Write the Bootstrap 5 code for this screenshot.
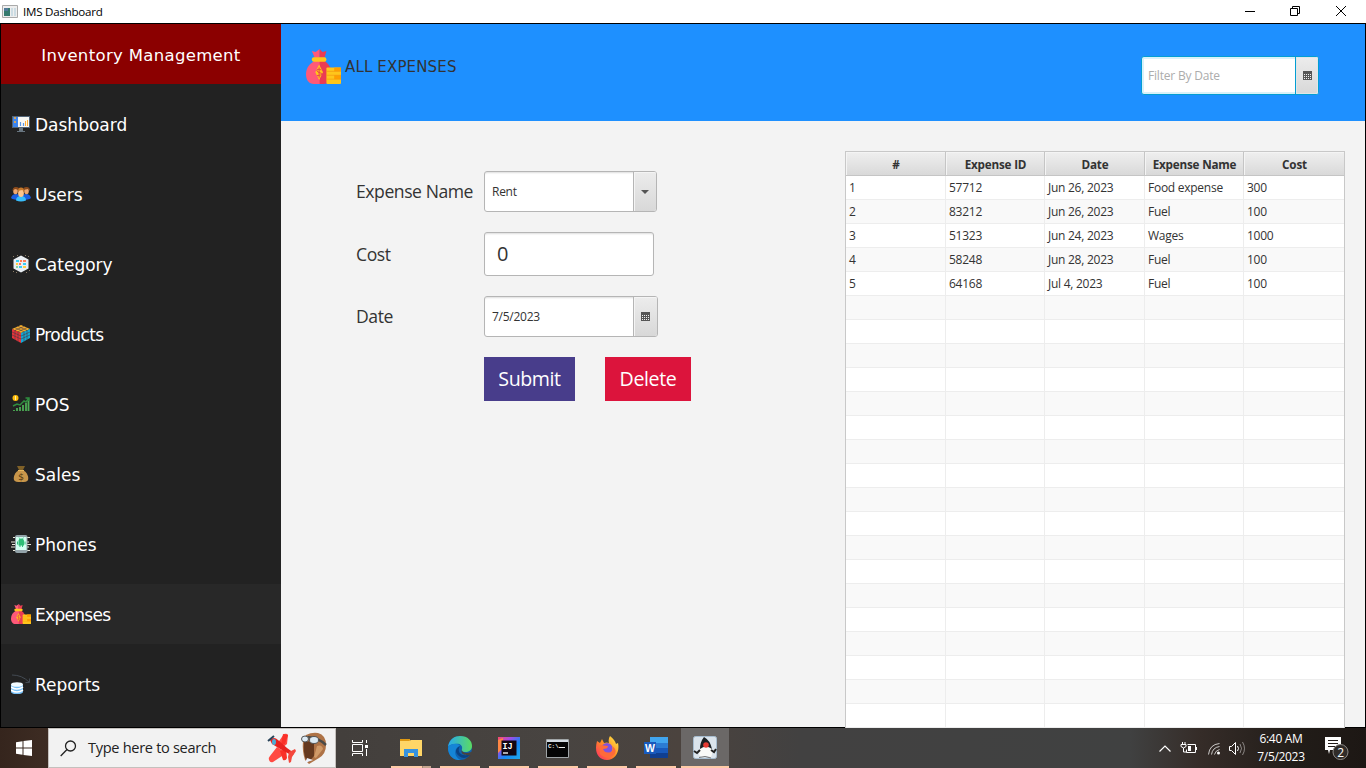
<!DOCTYPE html>
<html lang="en">
<head>
<meta charset="utf-8">
<meta name="viewport" content="width=device-width, initial-scale=1">
<title>IMS Dashboard</title>
<link href="https://cdn.jsdelivr.net/npm/bootstrap@5.3.0/dist/css/bootstrap.min.css" rel="stylesheet">
<style>
  body { width:1366px; height:768px; overflow:hidden; font-family:"Open Sans","Noto Sans",sans-serif; font-size:12px; letter-spacing:-.26px; line-height:1.2; color:#333; background:#fff; }
  svg { display:block; flex:none; letter-spacing:0; }
  .titlebar { height:23px; color:#000; padding-left:2px; }
  .titlebar .caption { font-size:11.6px; letter-spacing:-.25px; margin-left:5px; }
  .winbtn { width:45.5px; height:20px; }
  .frame { height:705px; border:1px solid #000; background:#f3f3f3; }
  .sidebar { width:280px; background:#222; flex:none; font-family:"DejaVu Sans",sans-serif; font-size:17px; letter-spacing:0; color:#fff; }
  .brand { height:60px; background:#8b0000; font-size:16.5px; letter-spacing:.33px; padding-top:3px; }
  .side-links { padding-top:10px; gap:10px; height:643px; overflow:hidden; }
  .side-links .nav-link { height:60px; color:#fff; padding:2px 0 0 10px; gap:4px; flex:none; }
  .side-links .nav-link.active { background:#282828; }
  .side-links .tight { letter-spacing:-.6px; }
  .side-links .active.tight { letter-spacing:-.7px; }
  .side-links svg { margin-top:-3px; }
  .page-head { height:97px; background:#1e90ff; padding:0 46px 0 24px; }
  .page-head h1 { font:15px "DejaVu Sans",sans-serif; letter-spacing:.15px; color:#333; margin:0; padding:1px 0 0 2px; }
  .control { display:flex; background:#fff; border:1px solid #b5b5b5; border-radius:3px; box-shadow:inset 0 2px 2px -1px #ddd; height:41px; }
  .control .value { flex:1; display:flex; align-items:center; padding:2px 0 0 7px; }
  .control .arrow { width:24px; border-left:1px solid #b5b5b5; border-radius:0 2px 2px 0; background:linear-gradient(#ececec,#d8d8d8); display:flex; align-items:center; justify-content:center; box-shadow:inset 1px 1px #f4f4f4; }
  .control .arrow.slim { width:23px; }
  .filter { width:178px; height:39px; border-color:#039ed3; box-shadow:inset 0 0 0 2px #d9f1f9; color:#acacac; letter-spacing:-.2px; }
  .filter .value { padding-left:6px; }
  .filter .arrow { border-color:#039ed3; box-shadow:inset 0 0 0 1px #e0e6e8; }
  .expense-form { display:grid; grid-template-columns:128px 210px; grid-template-rows:41px 44px 41px 44px; row-gap:20px; padding:50px 0 0 75px; width:564px; flex:none; align-content:start; }
  .expense-form label { font-size:17.6px; letter-spacing:-.45px; align-self:center; padding-top:1px; }
  .action { height:44px; border:0; border-radius:0; color:#fff; font-size:19.6px; letter-spacing:-.4px; padding:0; line-height:44px; }
  .table-pane { width:500px; height:577px; margin-top:30px; border:1px solid #c8c8c8; border-bottom:0; background:#fff; overflow:hidden; z-index:1; flex:none; }
  .grid-row { display:grid; grid-template-columns:100px 99px 100px 99px 100px; grid-template-rows:24px; height:24px; }
  .grid-row > div { border-right:1px solid #ededed; border-bottom:1px solid #ededed; padding-left:3px; line-height:23px; white-space:nowrap; }
  .grid-row:nth-child(odd) > div { background:#f9f9f9; }
  .grid-row.heading > div { background:linear-gradient(#efefef,#d9d9d9); border-color:#c5c5c5; font-weight:700; font-size:11.7px; letter-spacing:-.2px; text-align:center; padding:1px 0 0 1px; line-height:22px; box-shadow:inset 1px 1px #f4f4f4; }
  .grid-row > div:last-child { border-right:0; }
  .taskbar { height:40px; background:linear-gradient(90deg,#35251d 0,#3c2b22 40px,#433f3c 340px,#484441 560px,#4b433e 680px,#424141 800px,#404141 1130px,#352c28 1200px,#211c18 1300px,#1d1714 1366px); color:#fff; }
  .start { width:48px; }
  .search { width:288px; background:#f2f2f2; border:1px solid #c4c0bd; color:#222; padding:0 8px 0 11px; }
  .search span { font-size:14.6px; letter-spacing:-.32px; margin-left:11px; }
  .app { width:49px; position:relative; }
  .app svg { margin-right:2px; }
  .app::after { content:""; position:absolute; left:4px; right:5px; bottom:0; height:2px; background:#ffcba8; }
  .app.files::after { background:linear-gradient(90deg,#ffcba8 31px,#a28774 31px,#a28774 32px,#c5a58f 32px); }
  .app.current { background:#6b6867; width:48px; }
  .app.current svg { margin-right:0; }
  .app.current::after { left:0; right:0; }
  .clock { font-size:12px; letter-spacing:-.32px; line-height:18px; width:60px; }
</style>
</head>
<body>
<svg width="0" height="0" class="position-absolute">
  <defs>
    <symbol id="moneybag" viewBox="0 0 36 36">
      <path d="M9 12h6v24H8C3 36 0 32 0 26c0-7 4-11 9-14z" fill="#ff5978"/>
      <path d="M14 12h5c5 4 8 9 8 15 0 6-4 9-9 9h-4z" fill="#eb3b53"/>
      <path d="M6 2l4 1 4-3v9H9z" fill="#ff5978"/><path d="M14 0l3 3 4-1-2 7h-5z" fill="#eb3b53"/>
      <rect x="6" y="8.500" width="15" height="4.500" rx="2" fill="#ffc61b"/>
      <path d="M13.500 16l4 8-4 8-4-8z" fill="#ffc61b"/><path d="M15.700 21.500q-4.500-1.500-4.500.5t4.500 3-4.500 2.500M13.500 19v10.500" fill="none" stroke="#e8434c"/>
      <rect x="21" y="19" width="15" height="17" rx="1" fill="#ffc61b"/><path d="M29 19h7v4h-7zM29 27h7v4h-7z" fill="#ff9f00"/><path d="M21 23h15M21 27h15M21 31h15" stroke="#f29a12" stroke-width=".7"/>
    </symbol>
    <symbol id="calendar" viewBox="0 0 9 9"><path d="M0 0h9v9H0z" fill="#555"/><path d="M1 3.500h7M1 5.500h7M1 7.500h7" stroke="#eee" stroke-dasharray="1 1"/></symbol>
  </defs>
</svg>

<header class="titlebar d-flex align-items-center">
  <svg width="16" height="14" viewBox="0 0 16 14"><path d="M.5.5h15v12H.5z" fill="#eee" stroke="#aaa"/><path d="M2 3h6v8H2z" fill="#367b6f"/><path d="M2 3h4v3H2z" fill="#527a9a"/><path d="M9 3h2v8H9zM12 3h2v8h-2z" fill="#ccdce3"/></svg>
  <span class="caption">IMS Dashboard</span>
  <div class="d-flex ms-auto" style="margin-right:2px;margin-top:-2px">
    <div class="winbtn d-flex align-items-center justify-content-center"><svg width="10" height="10"><path d="M0 5.500h10" stroke="#000"/></svg></div>
    <div class="winbtn d-flex align-items-center justify-content-center"><svg width="10" height="10" fill="none" stroke="#000" style="margin-right:2px"><path d="M.5 2.500h7v7h-7zM2.500 2.500v-2h7v7h-2"/></svg></div>
    <div class="winbtn d-flex align-items-center justify-content-center"><svg width="10" height="10" stroke="#000" style="margin-right:1px"><path d="M0 0l10 10M10 0L0 10"/></svg></div>
  </div>
</header>

<div class="frame d-flex">
  <aside class="sidebar">
    <div class="brand d-flex align-items-center justify-content-center">Inventory Management</div>
    <nav class="side-links nav flex-column flex-nowrap">
      <a class="nav-link d-flex align-items-center"><svg width="20" height="20" viewBox="0 0 20 20"><path d="M1 2h18v12H1z" fill="#526477"/><path d="M2 3h5v10H2z" fill="#3c85ef"/><path d="M7 3h11v10H7z" fill="#f8f7f4"/><path d="M3 4h2M3 8h2" stroke="#ffad36" stroke-width="1.300"/><path d="M9.500 12V8M12.500 12v-3" stroke="#5b96e5" stroke-width="1.200"/><path d="M14.500 12V7M16.500 12V6" stroke="#ffad36"/><path d="M8 14h4v3h2v1H6v-1h2z" fill="#687580"/></svg>Dashboard</a>
      <a class="nav-link d-flex align-items-center"><svg width="20" height="20" viewBox="0 0 20 20"><path d="M0 14q1-4 5-4t5 4q1-4 5-4t5 4q-2 2-10 2T0 14z" fill="#1c5fe0"/><ellipse cx="4.500" cy="7" rx="2.300" ry="3.300" fill="#f0a870"/><ellipse cx="15.500" cy="7" rx="2.300" ry="3.300" fill="#f0a870"/><path d="M1.500 7q0-4 3.500-4t3 3l-4-1zM12 6q0-3 3.500-3t3.500 4l-2-2z" fill="#8a4a1c"/><path d="M5 16.500q0-4.500 5-4.500t5 4.500q-5 2-10 0z" fill="#38bdfb"/><ellipse cx="10" cy="9" rx="2.900" ry="4" fill="#ffc58c"/><path d="M7 8.500q-.5-5 3-5t3 5l-1.500-2.500-3 .5z" fill="#c8792a"/></svg>Users</a>
      <a class="nav-link d-flex align-items-center"><svg width="20" height="20" viewBox="0 0 20 20"><path d="M10 1.500l7.500 4v9l-7.500 4-7.500-4v-9z" fill="#e9eef3"/><path d="M5 6h3v2H5zM12 9h3v2h-3zM8 12h3v2H8z" fill="#37cdf5"/><path d="M9 6h2v2H9zM12 6h3v2h-3zM8 9h2v2H8z" fill="#ff7c55"/><path d="M5 9h2v2H5zM12 12h3v2h-3z" fill="#ffd044"/><path d="M5 12h2v2H5z" fill="#8ad8a2"/><path d="M2 2.500h1M6 1.500h1M14 1.500h1M17 2.500h1M2 17.500h1M5 18.500h1M15 18.500h1M18 16.500h1" stroke="#8a7b67"/></svg>Category</a>
      <a class="nav-link tight d-flex align-items-center"><svg width="20" height="20" viewBox="0 0 20 20"><path d="M10 1l9 4-9 4-9-4z" fill="#f4ae2c"/><path d="M1 5l9 4v10l-9-5z" fill="#e73339"/><path d="M19 5l-9 4v10l9-5z" fill="#13a8d4"/><path d="M4 3.700l9 4M7 2.400l9 4M16 3.700l-9 4M13 2.400l-9 4M1 8l9 4 9-4M1 11l9 4 9-4M4 6v10M7 8v10M13 8v10M16 6v10" fill="none" stroke="#493b45" stroke-width=".6"/></svg>Products</a>
      <a class="nav-link d-flex align-items-center"><svg width="20" height="20" viewBox="0 0 20 20"><circle cx="4.500" cy="4" r="3" fill="#ffbd0a"/><path d="M4.500 2v4" stroke="#fff1a3"/><path d="M2 12l4-2 3 1 4-4 2 1 3-4M14.500 4H18v3" fill="none" stroke="#2f8d3f" stroke-width="1.500"/><path d="M3 17v-1M6 17v-3M9 17v-4M12 17v-6M15 17V9M17.500 17V7" stroke="#4cac55" stroke-width="1.800"/></svg>POS</a>
      <a class="nav-link d-flex align-items-center"><svg width="20" height="20" viewBox="0 0 20 20"><path d="M8 6h4c4 2 6 7 5 10-.7 1.700-3 2-7 2s-6.300-.3-7-2C2 13 4 8 8 6z" fill="#c8964a"/><path d="M6 2h8l-2 4H8z" fill="#806128"/><path d="M7 6.500h6" stroke="#e4b75d"/><text x="6.900" y="16" font-size="9.500" font-family="DejaVu Sans" fill="#53370e">$</text></svg>Sales</a>
      <a class="nav-link d-flex align-items-center"><svg width="20" height="20" viewBox="0 0 20 20"><path d="M2 3.500h17M0 8h18M1 10.500h19M0 13h18M2 16.500h17" stroke="#e7e5d9" stroke-width="1.200"/><rect x="4" y="1" width="12.500" height="18" rx="2" fill="#93a3a9"/><path d="M5 3h10.500v13H5z" fill="#d4fff2"/><path d="M7.500 7q0-2.500 2.700-2.500T13 7v4.500H7.500zM8.500 11.500h1V13h-1zM11 11.500h1V13h-1zM6 7.500h1v3H6zM13.500 7.500h1v3h-1z" fill="#2ebd76"/><path d="M8 3.500l1 1.500M12.500 3.500l-1 1.500" stroke="#2ebd76" stroke-width=".7"/></svg>Phones</a>
      <a class="nav-link tight active d-flex align-items-center"><svg width="20" height="20"><use href="#moneybag"/></svg>Expenses</a>
      <a class="nav-link d-flex align-items-center"><svg width="20" height="20" viewBox="0 0 20 20"><path d="M1 1q10 0 17 7M14.500 8.500h4V4.500" fill="none" stroke="#434a52"/><path d="M0 10.500V18c1 3 11 3 12 0v-7.500z" fill="#78c0f6"/><ellipse cx="6" cy="10.500" rx="6" ry="2.300" fill="#f2fbff"/><path d="M0 13q6 4 12 0M0 16q6 4 12 0" fill="none" stroke="#fff" stroke-width="1.600"/></svg>Reports</a>
    </nav>
  </aside>

  <main class="flex-grow-1">
    <div class="page-head d-flex align-items-center">
      <div class="d-flex align-items-center" style="margin-top:-13px"><svg width="38" height="35" viewBox="0 0 38 35"><use href="#moneybag" x="1" width="35" height="35"/></svg><h1>ALL EXPENSES</h1></div>
      <div class="control filter ms-auto" style="margin-top:6px"><span class="value">Filter By Date</span><span class="arrow slim"><svg width="9" height="9"><use href="#calendar"/></svg></span></div>
    </div>
    <div class="d-flex">
      <form class="expense-form">
        <label>Expense Name</label>
        <div class="control" style="width:173px"><span class="value">Rent</span><span class="arrow slim"><svg width="8" height="4"><path d="M0 0h8L4 4z" fill="#555"/></svg></span></div>
        <label>Cost</label>
        <div class="control" style="width:170px;height:44px"><span class="value" style="font-size:20px;padding:0 0 0 12px">0</span></div>
        <label>Date</label>
        <div class="control" style="width:174px"><span class="value">7/5/2023</span><span class="arrow"><svg width="9" height="9"><use href="#calendar"/></svg></span></div>
        <span></span>
        <div class="d-flex" style="gap:30px"><button type="button" class="btn action" style="width:91px;background:#483d8b">Submit</button><button type="button" class="btn action" style="width:86px;background:#dc143c">Delete</button></div>
      </form>
      <section class="table-pane position-relative" id="expenses">
        <div class="grid-row heading"><div>#</div><div>Expense ID</div><div>Date</div><div>Expense Name</div><div>Cost</div></div>
        <div class="grid-row"><div>1</div><div>57712</div><div>Jun 26, 2023</div><div>Food expense</div><div>300</div></div>
        <div class="grid-row"><div>2</div><div>83212</div><div>Jun 26, 2023</div><div>Fuel</div><div>100</div></div>
        <div class="grid-row"><div>3</div><div>51323</div><div>Jun 24, 2023</div><div>Wages</div><div>1000</div></div>
        <div class="grid-row"><div>4</div><div>58248</div><div>Jun 28, 2023</div><div>Fuel</div><div>100</div></div>
        <div class="grid-row"><div>5</div><div>64168</div><div>Jul 4, 2023</div><div>Fuel</div><div>100</div></div>
      </section>
    </div>
  </main>
</div>

<footer class="taskbar d-flex align-items-stretch">
  <div class="start d-flex align-items-center justify-content-center"><svg width="16" height="16" viewBox="0 0 16 16" fill="#fff"><path d="M0 2.200l6.500-1v6.300H0zM7.500 1L16 0v7.500H7.500zM0 8.500h6.500v6.300l-6.500-1zM7.500 8.500H16V16l-8.500-1z"/></svg></div>
  <div class="search d-flex align-items-center">
    <svg width="17" height="17" fill="none" stroke="#222" stroke-width="1.300"><circle cx="10.500" cy="6" r="5"/><path d="M7 9.500L.7 16"/></svg><span>Type here to search</span>
    <svg class="ms-auto" width="60" height="32" viewBox="0 0 60 32"><path d="M17 2q3-1 4 1l-1 9-6 5-4-5zM2 28q-1-2 1-4l7-9 8 5-3 4-9 6q-3 1-4-2z" fill="#ff4a42"/><path d="M16 2l5 1-3 9-4 1zM19 17l1 9q-1 3-4 2l-3-9z" fill="#fa3028"/><path d="M3 8q4-4 8 0l9 8 7 5q0 2-3 2l-9-5-10-6z" fill="#e8221f"/><path d="M22 20l6-3 1 2-4 6-1 5-2 1-1-6z" fill="#f4473c"/><ellipse cx="7" cy="10" rx="2" ry="3" fill="#4caed6"/><path d="M1 9l6-5" stroke="#284359" stroke-width="2"/><path d="M39 3q6-3 12-2 8 2 8 12 0 9-7 13l-10 6-4-4q-3-9-2-19z" fill="#ae7347"/><path d="M37 10q6-2 10 2v12l-5 6-3-2q-3-8-2-18z" fill="#65391f"/><path d="M50 14q5-2 6 3l-7 9-2-1z" fill="#d09a68"/><path d="M36 6q12-3 23 7" fill="none" stroke="#4b4b48" stroke-width="2.500"/><ellipse cx="38" cy="7" rx="3.500" ry="3" fill="#dceaf4" stroke="#555"/><ellipse cx="47" cy="8" rx="4.500" ry="3.500" fill="#dceaf4" stroke="#555"/><path d="M38 31l2-5 6 2z" fill="#eef3ff"/></svg>
  </div>
  <div class="d-flex align-items-center justify-content-center" style="width:50px"><svg width="17" height="16" fill="none" stroke="#fff" style="margin-right:2px"><path d="M.5 0v2.500h10V0M.5 4.500h10v7H.5zM.5 16v-2.500h10V16M14.500 0v3M14.500 9v7"/><path d="M13 5h3v3h-3z" fill="#fff" stroke="none"/></svg></div>
  <div class="app files d-flex align-items-center justify-content-center" style="margin-left:1px"><svg width="22" height="20" viewBox="0 0 22 20"><path d="M0 1h10v4H0z" fill="#e09a13"/><path d="M0 3h9l2-1h11v16H0z" fill="#ffd667"/><path d="M4 19v-8h14v8h-4v-4H8v4z" fill="#3793df"/></svg></div>
  <div class="app d-flex align-items-center justify-content-center"><svg width="24" height="24" viewBox="0 0 24 24"><defs><linearGradient id="edge"><stop stop-color="#28a9ed"/><stop offset="1" stop-color="#5bdb62"/></linearGradient></defs><circle cx="12" cy="12" r="12" fill="#0f62b0"/><path d="M0 11C1 3 7 0 12 0c8 0 12 5 12 10 0 4-3 6-7 6-3 0-4-1-3-3 1-4-3-6-7-5-3 0-6 1-7 3z" fill="url(#edge)"/><path d="M0 12c1-4 10-6 12-2-7 2-6 12 1 14C6 25 0 20 0 12z" fill="#1585d6"/><path d="M12 10c-4 6 2 12 10 8q1 1-1 2-5 4-10 0c-5-4-3-8 1-10z" fill="#0a4384"/><path d="M14 13c-1 4 5 5 9 3l2 0-2 3c-7 1-11-1-9-6z" fill="#48433f"/></svg></div>
  <div class="app d-flex align-items-center justify-content-center"><svg width="22" height="22" viewBox="0 0 22 22"><defs><linearGradient id="ij" x2="1" y2="1"><stop stop-color="#ff4b65"/><stop offset=".3" stop-color="#a34be7"/><stop offset=".6" stop-color="#1586f4"/><stop offset="1" stop-color="#20a9ec"/></linearGradient></defs><path d="M0 0h22v22H0z" fill="url(#ij)"/><path d="M0 3l5-2v10l-5 5z" fill="#ff8744"/><path d="M3.500 3.500h15v15h-15z" fill="#120713"/><path d="M5 16h5" stroke="#fff" stroke-width="1.300"/><text x="4.500" y="11.500" font-family="Liberation Mono" font-size="8.500" font-weight="700" fill="#fff">IJ</text></svg></div>
  <div class="app d-flex align-items-center justify-content-center"><svg width="23" height="19" viewBox="0 0 23 19"><path d="M.5.5h22v18H.5z" fill="#050505" stroke="#a0a5a7"/><path d="M1 1h21v2H1z" fill="#d3dbe1"/><text x="2" y="9" font-family="Liberation Mono" font-size="6" font-weight="700" fill="#eee">C:\</text><path d="M13 8.500h6" stroke="#eee"/></svg></div>
  <div class="app d-flex align-items-center justify-content-center"><svg width="24" height="24" viewBox="0 0 24 24"><defs><linearGradient id="fire" x1="1" x2="0" y2="1"><stop stop-color="#fff34a"/><stop offset=".5" stop-color="#ff8c24"/><stop offset="1" stop-color="#ff246b"/></linearGradient></defs><path d="M15 0q5 4 6 8l2-1c2 9-3 17-11 17C3 24-1 16 2 5l3 2 2-4 2 4q3-1 5 0-1-4 1-7z" fill="url(#fire)"/><circle cx="12" cy="12.500" r="5.500" fill="#8052dd"/><path d="M5 9l8 1q0 3-5 3 2 5 8 3 3-3 1-6 6 4 2 9-7 6-14-1z" fill="#ff6a3a"/></svg></div>
  <div class="app d-flex align-items-center justify-content-center"><svg width="24" height="22" viewBox="0 0 24 22"><path d="M6 0h18v6H6z" fill="#41a5ee"/><path d="M6 6h18v5H6z" fill="#2b7cd3"/><path d="M6 11h18v5H6z" fill="#185abd"/><path d="M6 16h18v5H6z" fill="#103f91"/><path d="M0 5h12v12H0z" fill="#185abd"/><text x="1" y="15" font-family="Liberation Sans" font-size="10.500" font-weight="700" fill="#fff">W</text></svg></div>
  <div class="app current d-flex align-items-center justify-content-center"><svg width="24" height="24" viewBox="0 0 24 24"><rect x=".5" y=".5" width="23" height="22" rx="2" fill="#dbe4ec" stroke="#a7bdd0"/><path d="M8 10q5-4 9 0 4 6 1 11l-4-1-5 1-3-2q0-5 2-9z" fill="#fafaf8"/><path d="M11 1q6 3 8 12-6-5-12 0 0-7 4-12z" fill="#1b2024"/><path d="M7 14l-3 3-3-2M18 14l3 2 2-3" fill="none" stroke="#222" stroke-width="2"/><path d="M6 21.500l6-1 6 1.500" fill="none" stroke="#777"/><circle cx="13" cy="9" r="2.800" fill="#e63b33"/></svg></div>
  <div class="d-flex align-items-center ms-auto">
    <svg width="86" height="20" viewBox="1159 738 86 20" fill="none" stroke="#fff"><path d="M1159.500 751.500l5.500-5.500 5.500 5.500" stroke-width="1.200"/><path d="M1187.500 744.500h8v8h-9v-3M1196.500 747v3M1181 744.500h5v2q-2.500 3-5 0zM1182.500 742v2M1185 742v2M1183.500 748v4h3"/><path d="M1188 746h3v5h-3z" fill="#fff" stroke="none"/><path d="M1208.500 754.500q1-10 11-11M1211.500 754.500q1-7 8-8M1214.500 754.500q1-4 5-5" opacity=".75"/><circle cx="1218.500" cy="753" r="1.500" fill="#fff" stroke="none"/><path d="M1229.500 746.500h2l4-4v12l-4-4h-2z"/><path d="M1237.500 746q2 2.500 0 5"/><path d="M1240 744q3 4.500 0 9M1242.500 742q4 6.500 0 13" opacity=".45"/></svg>
    <div class="clock text-center" style="margin-left:6px">6:40 AM<br>7/5/2023</div>
    <svg width="25" height="26" viewBox="1324 738 25 26" style="margin-left:13px;margin-right:17px"><path d="M1325 740h16v13h-11l-1 4-1-4h-3z" fill="#fff"/><path d="M1328 743.500h10M1328 746.500h10M1328 749.500h7" stroke="#211c18"/><circle cx="1340.500" cy="755" r="7.500" fill="#302c29" stroke="#8d8a87"/><text x="1337.300" y="759.500" font-family="Open Sans" font-size="12" fill="#fff">2</text></svg>
  </div>
</footer>
<script src="https://cdn.jsdelivr.net/npm/bootstrap@5.3.0/dist/js/bootstrap.bundle.min.js"></script>
<script>
  // Fill the remaining table height with empty striped rows.
  const pane = document.getElementById('expenses');
  for (let i = 0; i < 18; i++) {
    const row = document.createElement('div');
    row.className = 'grid-row';
    row.innerHTML = '<div></div>'.repeat(5);
    pane.append(row);
  }
</script>
</body>
</html>
